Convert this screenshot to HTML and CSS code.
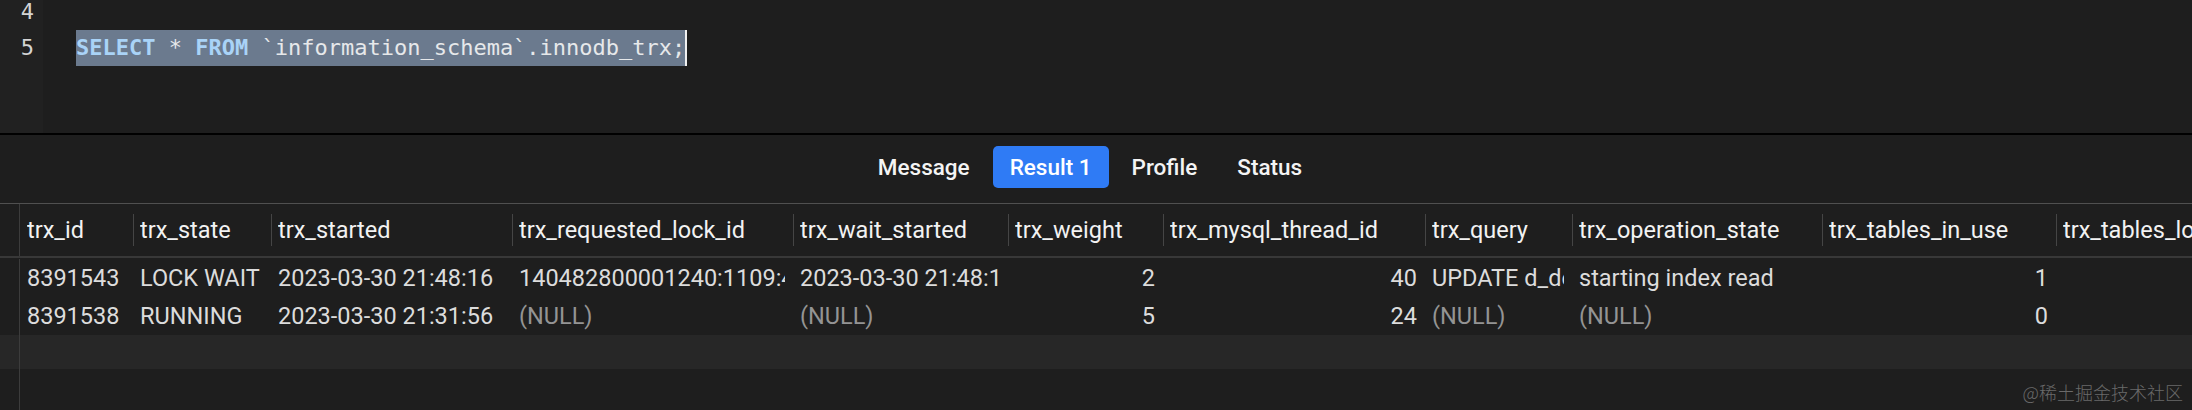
FILE: index.html
```html
<!DOCTYPE html>
<html lang="zh-CN">
<head>
<meta charset="utf-8">
<title>innodb_trx</title>
<link rel="stylesheet" href="styles.css">
</head>
<body>
<div class="app">
  <div class="editor">
    <div class="gutter">
      <div class="lines">
        <div class="ln">4</div>
        <div class="ln">5</div>
      </div>
    </div>
    <div class="code">
      <div class="lines">
        <div class="cl"></div>
        <div class="cl"><span class="sel"><span class="kw">SELECT</span> * <span class="kw">FROM</span> `information_schema`.innodb_trx;</span><span class="caret"></span></div>
      </div>
    </div>
  </div>

  <div class="results">
    <div class="tabs">
      <div class="tab">Message</div>
      <div class="tab active">Result 1</div>
      <div class="tab">Profile</div>
      <div class="tab">Status</div>
    </div>

    <div class="table">
      <div class="row head">
        <div class="rn"></div>
        <div class="c first"><span>trx_id</span></div>
        <div class="c"><span>trx_state</span></div>
        <div class="c"><span>trx_started</span></div>
        <div class="c"><span>trx_requested_lock_id</span></div>
        <div class="c"><span>trx_wait_started</span></div>
        <div class="c"><span>trx_weight</span></div>
        <div class="c"><span>trx_mysql_thread_id</span></div>
        <div class="c"><span>trx_query</span></div>
        <div class="c"><span>trx_operation_state</span></div>
        <div class="c"><span>trx_tables_in_use</span></div>
        <div class="c"><span>trx_tables_locked</span></div>
      </div>
      <div class="row">
        <div class="rn"></div>
        <div class="c"><span>8391543</span></div>
        <div class="c"><span>LOCK WAIT</span></div>
        <div class="c"><span>2023-03-30 21:48:16</span></div>
        <div class="c"><span>140482800001240:1109:4:3:140482800001240</span></div>
        <div class="c"><span>2023-03-30 21:48:16</span></div>
        <div class="c num"><span>2</span></div>
        <div class="c num"><span>40</span></div>
        <div class="c"><span>UPDATE d_dept SET name = 'x' WHERE id = 1</span></div>
        <div class="c"><span>starting index read</span></div>
        <div class="c num"><span>1</span></div>
        <div class="c num"><span>1</span></div>
      </div>
      <div class="row">
        <div class="rn"></div>
        <div class="c"><span>8391538</span></div>
        <div class="c"><span>RUNNING</span></div>
        <div class="c"><span>2023-03-30 21:31:56</span></div>
        <div class="c null"><span>(NULL)</span></div>
        <div class="c null"><span>(NULL)</span></div>
        <div class="c num"><span>5</span></div>
        <div class="c num"><span>24</span></div>
        <div class="c null"><span>(NULL)</span></div>
        <div class="c null"><span>(NULL)</span></div>
        <div class="c num"><span>0</span></div>
        <div class="c num"><span>2</span></div>
      </div>
      <div class="row stripe">
        <div class="rn"></div>
      </div>
      <div class="row filler">
        <div class="rn"></div>
      </div>
    </div>
    <div class="watermark">@稀土掘金技术社区</div>
  </div>
</div>
</body>
</html>
```

FILE: styles.css
```css
* { box-sizing: border-box; }

html, body {
  margin: 0;
  padding: 0;
  background: #1e1e1e;
  width: 2192px;
  height: 410px;
  overflow: hidden;
}

.app {
  display: flex;
  flex-direction: column;
  height: 410px;
  position: relative;
}

/* ---------- editor ---------- */
.editor {
  height: 135px;
  display: flex;
  border-bottom: 2px solid #000;
  overflow: hidden;
  background: #1e1e1e;
}

.gutter {
  width: 43px;
  background: #212121;
  flex: none;
}

.lines {
  margin-top: -6px;
}

.ln {
  height: 36px;
  line-height: 36px;
  text-align: right;
  padding-right: 9px;
  font-family: "DejaVu Sans Mono", monospace;
  font-size: 22px;
  color: #d4d4d4;
}

.code {
  flex: 1;
  padding-left: 33px;
}

.cl {
  height: 36px;
  line-height: 36px;
  font-family: "DejaVu Sans Mono", monospace;
  font-size: 22px;
  color: #e6e8ea;
  white-space: pre;
  display: flex;
  align-items: stretch;
}

.sel {
  background: #6b7a8e;
  display: inline-block;
  height: 36px;
}

.kw {
  color: #a9d3f7;
  font-weight: bold;
}

.caret {
  display: inline-block;
  width: 2px;
  height: 36px;
  background: #f0f0f0;
}

/* ---------- results ---------- */
.results {
  flex: 1;
  display: flex;
  flex-direction: column;
  min-height: 0;
}

.tabs {
  height: 69px;
  flex: none;
  display: flex;
  justify-content: center;
  align-items: center;
  gap: 6px;
  border-bottom: 1px solid #505050;
  padding-bottom: 4px;
  padding-right: 12px;
}

.tab {
  height: 42px;
  line-height: 42px;
  padding: 0 17px;
  border-radius: 5px;
  font-family: Roboto, "Liberation Sans", sans-serif;
  font-size: 22.5px;
  font-weight: 500;
  color: #f4f4f4;
}

.tab.active {
  background: #2f7bf5;
  color: #ffffff;
}

.table {
  flex: 1;
  display: flex;
  flex-direction: column;
  overflow: hidden;
  font-family: Roboto, "Liberation Sans", sans-serif;
  font-size: 23.5px;
  color: #dcdcdc;
}

.row {
  display: grid;
  grid-template-columns: 20px 113px 138px 241px 281px 215px 155px 262px 147px 250px 234px 234px;
  height: 38px;
  flex: none;
}

.row .rn {
  border-right: 1px solid #3c3c3c;
}

.row.head {
  height: 54px;
  border-bottom: 2px solid #383838;
  color: #f2f2f2;
}

.row.head + .row {
  padding-top: 1px;
  height: 39px;
}

.row.stripe {
  height: 34px;
  background: #272727;
}

.row.filler {
  flex: 1;
  height: auto;
}

.c {
  display: flex;
  align-items: center;
  padding: 0 8px 0 7px;
  min-width: 0;
  white-space: nowrap;
}

.c > span {
  display: block;
  overflow: hidden;
  flex: 1;
  min-width: 0;
}

.head .c {
  padding-left: 0;
}

.head .c::before {
  content: "";
  flex: none;
  width: 1px;
  height: 32px;
  background: #454545;
  margin-right: 6px;
}

.head .c.first {
  padding-left: 7px;
}

.head .c.first::before {
  display: none;
}

.c.num > span {
  text-align: right;
}

.c.null {
  color: #949494;
}

.watermark {
  position: absolute;
  right: 9px;
  bottom: 6px;
  font-family: "Noto Sans CJK SC", sans-serif;
  font-size: 18px;
  font-weight: 300;
  color: #6a6a6a;
  line-height: 1.2;
}
```
